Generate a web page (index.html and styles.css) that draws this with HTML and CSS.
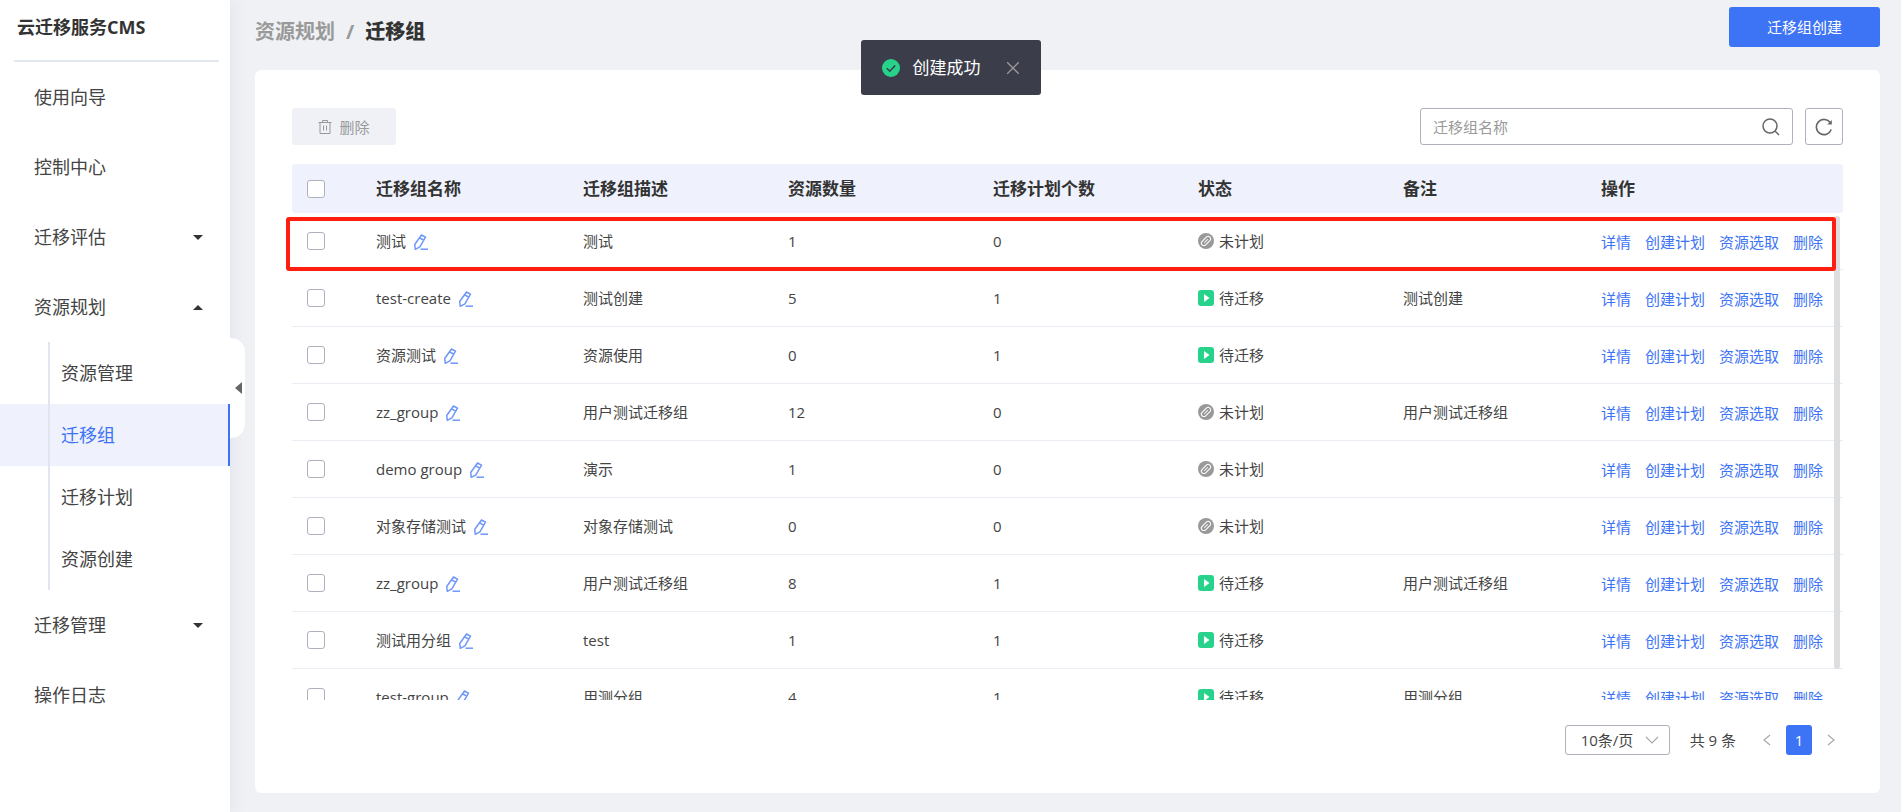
FILE: index.html
```html
<!DOCTYPE html>
<html lang="zh-CN">
<head>
    <meta charset="UTF-8">
    <title>云迁移服务CMS</title>
    <meta name="viewport" content="width=device-width, initial-scale=1.0">
    <link rel="stylesheet" href="styles.css">
</head>
<body>
    <!-- 图标 -->
    <svg class="symbols" aria-hidden="true">
        <symbol id="i-edit" viewBox="0 0 16 16">
            <path d="M8.500 1l4 2.200-5.600 9.600-4.600 2.500-.6-4.800zM6.800 4l4 2.200" fill="none" stroke="currentColor" stroke-width="1.500" stroke-linejoin="round"/>
            <path d="M7.500 15.200H15" stroke="currentColor" stroke-width="1.500"/>
        </symbol>
        <symbol id="i-wait" viewBox="0 0 16 16">
            <circle cx="8" cy="8" r="8" fill="#999"/>
            <g fill="none" stroke="#fff" transform="rotate(-45 8 8)">
                <path d="M9.500 10.500H5a2.500 2.500 0 0 1 0-5h4.500M6.500 5.500H11a2.500 2.500 0 0 1 0 5H6.500M5.500 8h5"/>
            </g>
        </symbol>
        <symbol id="i-ready" viewBox="0 0 16 16">
            <rect width="16" height="16" rx="3" fill="#27d38a"/>
            <path d="M6 4l5.500 4L6 12z" fill="#fff"/>
        </symbol>
    </svg>

    <div class="layout">
        <aside class="sidebar">
            <h1 class="brand">云迁移服务CMS</h1>
            <nav>
                <a class="item" href="#">使用向导</a>
                <a class="item" href="#">控制中心</a>
                <a class="item down" href="#">迁移评估</a>
                <a class="item up" href="#">资源规划</a>
                <div class="submenu">
                    <a href="#">资源管理</a>
                    <a class="active" href="#">迁移组</a>
                    <a href="#">迁移计划</a>
                    <a href="#">资源创建</a>
                </div>
                <a class="item down" href="#">迁移管理</a>
                <a class="item" href="#">操作日志</a>
            </nav>
            <button class="collapse" type="button" aria-label="收起菜单"></button>
        </aside>

        <main class="main">
            <header class="topbar">
                <div class="crumb"><a href="#">资源规划</a><i>/</i><b>迁移组</b></div>
                <button class="create" type="button">迁移组创建</button>
            </header>

            <section class="card">
                <div class="toolbar">
                    <button class="remove" type="button" disabled>
                        <svg width="14" height="14" viewBox="0 0 14 14" fill="none" stroke="currentColor"><path d="M.5 2.500h13M4.500 2.500v-2h5v2M2 2.500v11h10v-11M5.500 5.500v5M8.500 5.500v5"/></svg>
                        删除
                    </button>
                    <div class="search">
                        <input type="text" placeholder="迁移组名称" aria-label="迁移组名称">
                        <svg width="18" height="18" viewBox="0 0 18 18" fill="none" stroke="#666" stroke-width="1.500"><circle cx="8" cy="8" r="7"/><path d="M13 13l4 4"/></svg>
                    </div>
                    <button class="refresh" type="button" aria-label="刷新">
                        <svg width="18" height="18" viewBox="0 0 18 18" fill="none" stroke="#666" stroke-width="1.600"><path d="M16.200 11.500A7.600 7.600 0 1 1 15.200 4.600"/><path d="M16.800 2v4.500h-4.500z" fill="#666" stroke="none"/></svg>
                    </button>
                </div>

                <div class="table-wrap">
                    <div class="table-view">
                        <table>
                            <colgroup>
                                <col class="c-check"><col class="c-name"><col class="c-mid"><col class="c-mid"><col class="c-mid"><col class="c-mid"><col class="c-note"><col class="c-ops">
                            </colgroup>
                            <thead>
                                <tr>
                                    <th><input type="checkbox" aria-label="全选"></th>
                                    <th>迁移组名称</th>
                                    <th>迁移组描述</th>
                                    <th>资源数量</th>
                                    <th>迁移计划个数</th>
                                    <th>状态</th>
                                    <th>备注</th>
                                    <th>操作</th>
                                </tr>
                            </thead>
                            <tbody id="rows"></tbody>
                        </table>
                    </div>
                    <div class="thumb"></div>
                    <div class="mark"></div>
                </div>

                <div class="pager">
                    <label class="size">
                        <select aria-label="每页条数"><option>10条/页</option><option>20条/页</option></select>
                        <svg width="14" height="8" viewBox="0 0 14 8" fill="none" stroke="#aaa" stroke-width="1.200"><path d="M1 1l6 6 6-6"/></svg>
                    </label>
                    <span class="total">共 9 条</span>
                    <button type="button" aria-label="上一页"><svg width="8" height="12" viewBox="0 0 8 12" fill="none" stroke="#aaa" stroke-width="1.200"><path d="M7 1L1 6l6 5"/></svg></button>
                    <button class="current" type="button">1</button>
                    <button type="button" aria-label="下一页"><svg width="8" height="12" viewBox="0 0 8 12" fill="none" stroke="#aaa" stroke-width="1.200"><path d="M1 1l6 5-6 5"/></svg></button>
                </div>
            </section>
        </main>
    </div>

    <div class="toast" role="status">
        <svg width="18" height="18" viewBox="0 0 18 18"><circle cx="9" cy="9" r="9" fill="#27d38a"/><path d="M4.800 9.200l3 3 5.400-5.700" fill="none" stroke="#3b3e4a" stroke-width="1.600"/></svg>
        <span>创建成功</span>
        <button type="button" aria-label="关闭"><svg width="12" height="12" viewBox="0 0 12 12" stroke="#999" stroke-width="1.300"><path d="M0 0l12 12M12 0L0 12"/></svg></button>
    </div>

    <script src="main.js"></script>
</body>
</html>
```
FILE: styles.css
```css
* {
    box-sizing: border-box;
}
body {
    margin: 0;
    font-family: "Open Sans", "Noto Sans CJK SC", sans-serif;
    font-size: 15px;
    line-height: 20px;
    color: #444;
    background: #eff1f5;
}
a {
    color: inherit;
    text-decoration: none;
}
button, input, select {
    font: inherit;
    color: inherit;
    margin: 0;
}
button {
    padding: 0;
    border: 0;
    background: none;
    cursor: pointer;
}
svg {
    display: block;
    flex: none;
}
.symbols {
    position: absolute;
    width: 0;
    height: 0;
}
.layout {
    display: flex;
    height: 100vh;
}

/* 左侧菜单 */
.sidebar {
    position: relative;
    flex: none;
    width: 230px;
    padding-top: 15px;
    background: #fff;
    box-shadow: 2px 0 16px rgba(60, 70, 110, .08);
}
.brand {
    margin: 0 11px 0 14px;
    padding: 0 3px 21px;
    border-bottom: 2px solid #e3e7f0;
    font-size: 18px;
    line-height: 24px;
    color: #333;
}
.item {
    display: flex;
    align-items: center;
    height: 70px;
    padding: 0 27px 0 34px;
    font-size: 18px;
}
.item::after {
    margin-left: auto;
    border: 5px solid transparent;
}
.down::after {
    content: "";
    border-top-color: #333;
    border-bottom: 0;
}
.up::after {
    content: "";
    border-bottom-color: #333;
    border-top: 0;
}
.submenu {
    position: relative;
}
.submenu::before {
    content: "";
    position: absolute;
    top: 0;
    bottom: 0;
    left: 48px;
    width: 2px;
    background: #e1e5ef;
}
.submenu a {
    display: block;
    padding-left: 61px;
    font-size: 18px;
    line-height: 62px;
}
.submenu .active {
    color: #3d73f5;
    background: #eff2fc;
    border-right: 2px solid #3d73f5;
}
.collapse {
    position: absolute;
    top: 338px;
    left: 230px;
    width: 15px;
    height: 100px;
    border-radius: 0 14px 14px 0;
    background: #fff;
}
.collapse::before {
    content: "";
    display: block;
    width: 0;
    margin-left: 5px;
    border: 6px solid transparent;
    border-right: 7px solid #666;
    border-left: 0;
}

/* 右侧内容 */
.main {
    flex: 1;
    min-width: 0;
    display: flex;
    flex-direction: column;
    padding: 0 21px 19px 25px;
}
.topbar {
    display: flex;
    justify-content: space-between;
    align-items: flex-start;
    height: 70px;
    padding-top: 7px;
}
.crumb {
    font-size: 20px;
    line-height: 50px;
    font-weight: bold;
    color: #999;
}
.crumb i {
    margin: 0 11px;
    font-style: normal;
}
.crumb b {
    color: #333;
}
.create {
    width: 151px;
    height: 40px;
    border-radius: 3px;
    color: #fff;
    background: #3d73f5;
}
.card {
    flex: 1;
    min-height: 0;
    display: flex;
    flex-direction: column;
    padding: 38px 37px;
    border-radius: 6px;
    background: #fff;
}
.toolbar {
    display: flex;
    gap: 12px;
    margin-bottom: 19px;
}
.remove {
    display: flex;
    align-items: center;
    justify-content: center;
    gap: 7px;
    width: 104px;
    height: 37px;
    border-radius: 3px;
    color: #999;
    background: #eff1f6;
}
.search {
    display: flex;
    align-items: center;
    width: 373px;
    height: 37px;
    margin-left: auto;
    padding: 0 12px;
    border: 1px solid #b0b0bf;
    border-radius: 3px;
}
.search input {
    flex: 1;
    min-width: 0;
    padding: 0;
    border: 0;
    outline: none;
    background: none;
}
.search input::placeholder {
    color: #999;
}
.refresh {
    display: flex;
    align-items: center;
    justify-content: center;
    width: 38px;
    height: 37px;
    border: 1px solid #b0b0bf;
    border-radius: 3px;
}

/* 表格 */
.table-wrap {
    position: relative;
    flex: 1;
    min-height: 0;
}
.table-view {
    height: 100%;
    overflow: hidden;
}
table {
    width: 100%;
    table-layout: fixed;
    border-collapse: separate;
    border-spacing: 0;
}
.c-check {
    width: 69px;
}
.c-name {
    width: 207px;
}
.c-mid {
    width: 205px;
}
.c-note {
    width: 198px;
}
.c-ops {
    width: 257px;
}
th, td {
    padding: 0 0 0 15px;
    text-align: left;
    white-space: nowrap;
}
th {
    height: 49px;
    font-size: 17px;
    color: #333;
    background: #eff2fc;
}
th:first-child {
    border-radius: 3px 0 0 3px;
}
th:last-child {
    border-radius: 0 3px 3px 0;
}
td {
    height: 57px;
    border-bottom: 1px solid #ebedf5;
}
input[type="checkbox"] {
    appearance: none;
    display: block;
    width: 18px;
    height: 18px;
    border: 1px solid #b0b0bf;
    border-radius: 3px;
    background: #fff;
}
.cell {
    display: flex;
    align-items: center;
    gap: 7px;
}
.status {
    gap: 5px;
}
.cell svg {
    width: 16px;
    height: 16px;
}
.edit {
    padding-top: 2px;
    color: #6f97fa;
}
.ops {
    display: flex;
    gap: 14px;
    padding-top: 2px;
    color: #3d73f5;
}
.thumb {
    position: absolute;
    top: 52px;
    right: 3px;
    bottom: 31px;
    width: 6px;
    border-radius: 3px;
    background: #dddee0;
}
.mark {
    position: absolute;
    top: 53px;
    left: -6px;
    right: 7px;
    height: 54px;
    border: 4px solid #ff1e10;
    border-radius: 3px;
    pointer-events: none;
}

/* 分页 */
.pager {
    display: flex;
    justify-content: flex-end;
    align-items: center;
    height: 30px;
    margin-top: 25px;
    margin-right: -7px;
}
.size {
    position: relative;
}
.size select {
    display: block;
    appearance: none;
    width: 105px;
    height: 30px;
    padding: 0 15px;
    border: 1px solid #b0b0bf;
    border-radius: 3px;
    background: #fff;
}
.size svg {
    position: absolute;
    top: 11px;
    right: 11px;
    pointer-events: none;
}
.total {
    margin: 0 12px 0 20px;
}
.pager button {
    display: flex;
    align-items: center;
    justify-content: center;
    width: 38px;
    height: 30px;
}
.pager .current {
    width: 26px;
    border-radius: 3px;
    color: #fff;
    background: #3d73f5;
}

/* 提示 */
.toast {
    position: absolute;
    top: 40px;
    left: 50%;
    display: flex;
    align-items: center;
    width: 180px;
    height: 55px;
    margin-left: -90px;
    padding: 0 22px 0 21px;
    border-radius: 3px;
    font-size: 17px;
    color: #fff;
    background: #3b3e4a;
}
.toast span {
    margin: 0 auto 0 13px;
}
```
FILE: main.js
```js
var groups = [
    ['测试', '测试', 1, 0, ''],
    ['test-create', '测试创建', 5, 1, '测试创建'],
    ['资源测试', '资源使用', 0, 1, ''],
    ['zz_group', '用户测试迁移组', 12, 0, '用户测试迁移组'],
    ['demo group', '演示', 1, 0, ''],
    ['对象存储测试', '对象存储测试', 0, 0, ''],
    ['zz_group', '用户测试迁移组', 8, 1, '用户测试迁移组'],
    ['测试用分组', 'test', 1, 1, ''],
    ['test-group', '用测分组', 4, 1, '用测分组']
];
var html = '';
for (var i = 0; i < groups.length; i++) {
    var g = groups[i];
    //有计划的为待迁移，否则未计划
    var icon = g[3] ? 'i-ready' : 'i-wait';
    var text = g[3] ? '待迁移' : '未计划';
    html += '<tr>' +
        '<td><input type="checkbox" aria-label="选择 ' + g[0] + '"></td>' +
        '<td><div class="cell">' + g[0] + '<button class="edit" type="button" aria-label="编辑"><svg><use href="#i-edit"/></svg></button></div></td>' +
        '<td>' + g[1] + '</td>' +
        '<td>' + g[2] + '</td>' +
        '<td>' + g[3] + '</td>' +
        '<td><div class="cell status"><svg><use href="#' + icon + '"/></svg>' + text + '</div></td>' +
        '<td>' + g[4] + '</td>' +
        '<td><div class="ops"><a href="#">详情</a><a href="#">创建计划</a><a href="#">资源选取</a><a href="#">删除</a></div></td>' +
        '</tr>';
}
document.getElementById('rows').innerHTML = html;
```
